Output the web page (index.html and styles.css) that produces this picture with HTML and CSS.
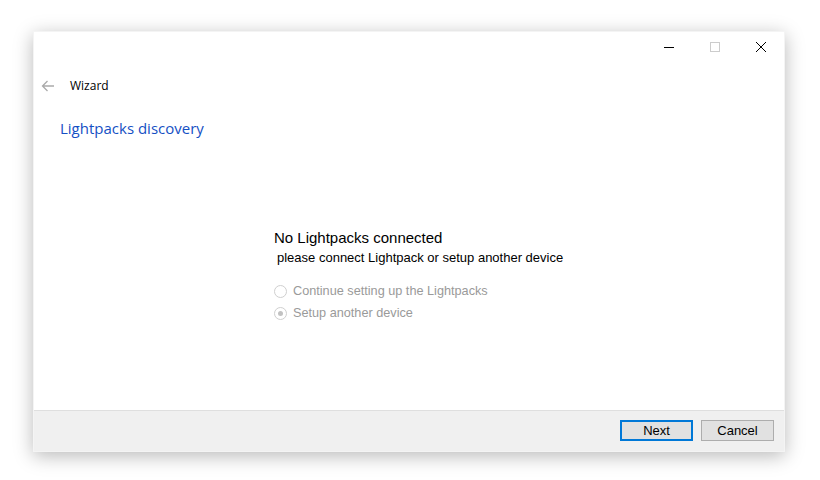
FILE: index.html
```html
<!DOCTYPE html>
<html lang="en">
<head>
    <meta charset="UTF-8">
    <title>Wizard</title>
    <link rel="stylesheet" href="styles.css">
</head>
<body>
    <div class="window">
        <div class="titlebar">
            <span class="caption-btn">
                <svg width="10" height="10" viewBox="0 0 10 10"><path d="M0 5.5H10" stroke="#000" stroke-width="1"/></svg>
            </span>
            <span class="caption-btn">
                <svg width="10" height="10" viewBox="0 0 10 10"><rect x="0.5" y="0.5" width="9" height="9" fill="none" stroke="#ccc"/></svg>
            </span>
            <span class="caption-btn">
                <svg width="10" height="10" viewBox="0 0 10 10"><path d="M0 0L10 10M10 0L0 10" stroke="#000" stroke-width="1"/></svg>
            </span>
        </div>
        <div class="nav">
            <svg class="back" width="14" height="12" viewBox="0 0 14 12"><path d="M13 6H1.5M6.5 1L1.5 6L6.5 11" fill="none" stroke="#aaa" stroke-width="1.3"/></svg>
            <span class="nav-title">Wizard</span>
        </div>
        <h1 class="page-title">Lightpacks discovery</h1>
        <div class="content">
            <div class="panel">
                <div class="status">No Lightpacks connected</div>
                <div class="hint">please connect Lightpack or setup another device</div>
                <div class="options">
                    <label class="radio"><span class="dot"></span>Continue setting up the Lightpacks</label>
                    <label class="radio checked"><span class="dot"></span>Setup another device</label>
                </div>
            </div>
        </div>
        <div class="footer">
            <button class="btn default">Next</button>
            <button class="btn">Cancel</button>
        </div>
    </div>
</body>
</html>
```

FILE: styles.css
```css
html, body {
    margin: 0;
    padding: 0;
    background: #fff;
}

body {
    box-sizing: border-box;
    min-height: 480px;
    padding: 31px 0 0 33px;
    font-family: "Liberation Sans", Arial, sans-serif;
}

.window {
    width: 750px;
    height: 419px;
    border: 1px solid #f4f4f4;
    background: #fff;
    box-shadow: 0 4px 18px rgba(0,0,0,0.28);
    display: flex;
    flex-direction: column;
}

.titlebar {
    height: 30px;
    display: flex;
    justify-content: flex-end;
}

.caption-btn {
    width: 46px;
    display: flex;
    align-items: center;
    justify-content: center;
}

.nav {
    height: 47px;
    display: flex;
    align-items: center;
    padding-left: 7px;
}

.back {
    margin-right: 15px;
}

.nav-title {
    font-family: "Open Sans", sans-serif;
    font-size: 12px;
    color: #000;
}

.page-title {
    margin: 0;
    padding: 9px 0 0 26px;
    height: 32px;
    font-family: "Open Sans", sans-serif;
    font-weight: normal;
    font-size: 15px;
    color: #1550c4;
}

.content {
    flex: 1;
    padding-left: 240px;
}

.panel {
    padding-top: 79px;
}

.status {
    font-size: 15px;
    color: #000;
    height: 19px;
}

.hint {
    font-size: 13px;
    color: #000;
    margin-left: 3px;
    margin-top: 2px;
}

.options {
    margin-top: 15px;
}

.radio {
    display: flex;
    align-items: center;
    height: 22px;
    font-size: 12.7px;
    color: #9a9a9a;
}

.dot {
    width: 11px;
    height: 11px;
    border: 1px solid #cfcfcf;
    border-radius: 50%;
    margin-right: 6px;
    position: relative;
}

.checked .dot::after {
    content: "";
    position: absolute;
    left: 3px;
    top: 3px;
    width: 5px;
    height: 5px;
    border-radius: 50%;
    background: #c2c2c2;
}

.footer {
    height: 40px;
    border-top: 1px solid #dfdfdf;
    background: #f0f0f0;
    display: flex;
    justify-content: flex-end;
    align-items: center;
    gap: 8px;
    padding-right: 10px;
}

.btn {
    width: 73px;
    height: 21px;
    margin-bottom: 2px;
    background: #e1e1e1;
    border: 1px solid #adadad;
    font-family: "Liberation Sans", Arial, sans-serif;
    font-size: 13px;
    color: #000;
    padding: 0;
}

.btn.default {
    border: 2px solid #0078d7;
}
```
